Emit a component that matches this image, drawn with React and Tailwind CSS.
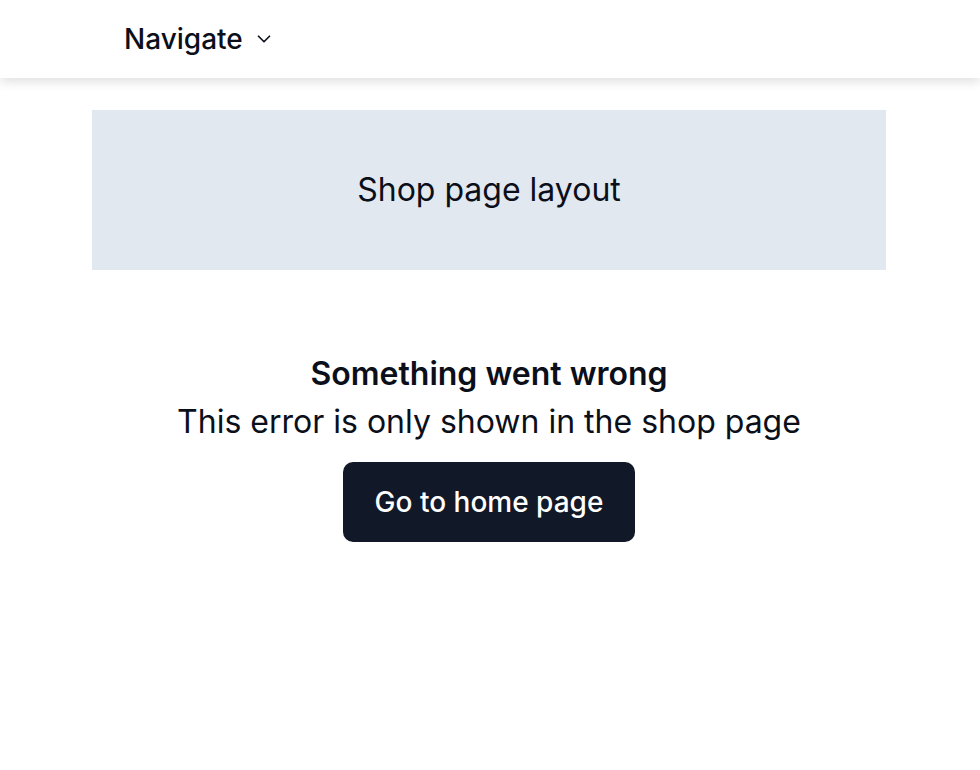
import React from "react";

const ChevronDown = () => (
  <svg width="22" height="22" viewBox="0 0 24 24" fill="none" stroke="currentColor" strokeWidth="1.8" strokeLinecap="round" strokeLinejoin="round">
    <path d="m6 9 6 6 6-6" />
  </svg>
);

export default function App() {
  return (
    <div className="min-h-screen bg-white text-[#0b0f1a]" style={{ fontFamily: "Inter, 'Noto Sans', sans-serif" }}>
      {/* Header */}
      <header className="h-[78px] bg-white shadow-[0_4px_10px_rgba(0,0,0,0.12)] flex items-center pl-[124px]">
        <button className="flex items-center gap-[10px] text-[28px] font-medium">
          Navigate
          <ChevronDown />
        </button>
      </header>

      <main className="mx-[92px] mt-[32px] w-[794px]">
        {/* Layout box */}
        <div className="h-[160px] bg-[#e2e8f0] flex items-center justify-center text-[32px]">
          Shop page layout
        </div>

        {/* Error */}
        <div className="mt-[80px] flex flex-col items-center">
          <h2 className="text-[32px] font-semibold leading-[48px]">Something went wrong</h2>
          <p className="text-[32px] leading-[48px]">This error is only shown in the shop page</p>
          <button className="mt-[16px] h-[80px] px-[32px] rounded-[10px] bg-[#111827] text-white text-[28px] font-medium">
            Go to home page
          </button>
        </div>
      </main>
    </div>
  );
}
